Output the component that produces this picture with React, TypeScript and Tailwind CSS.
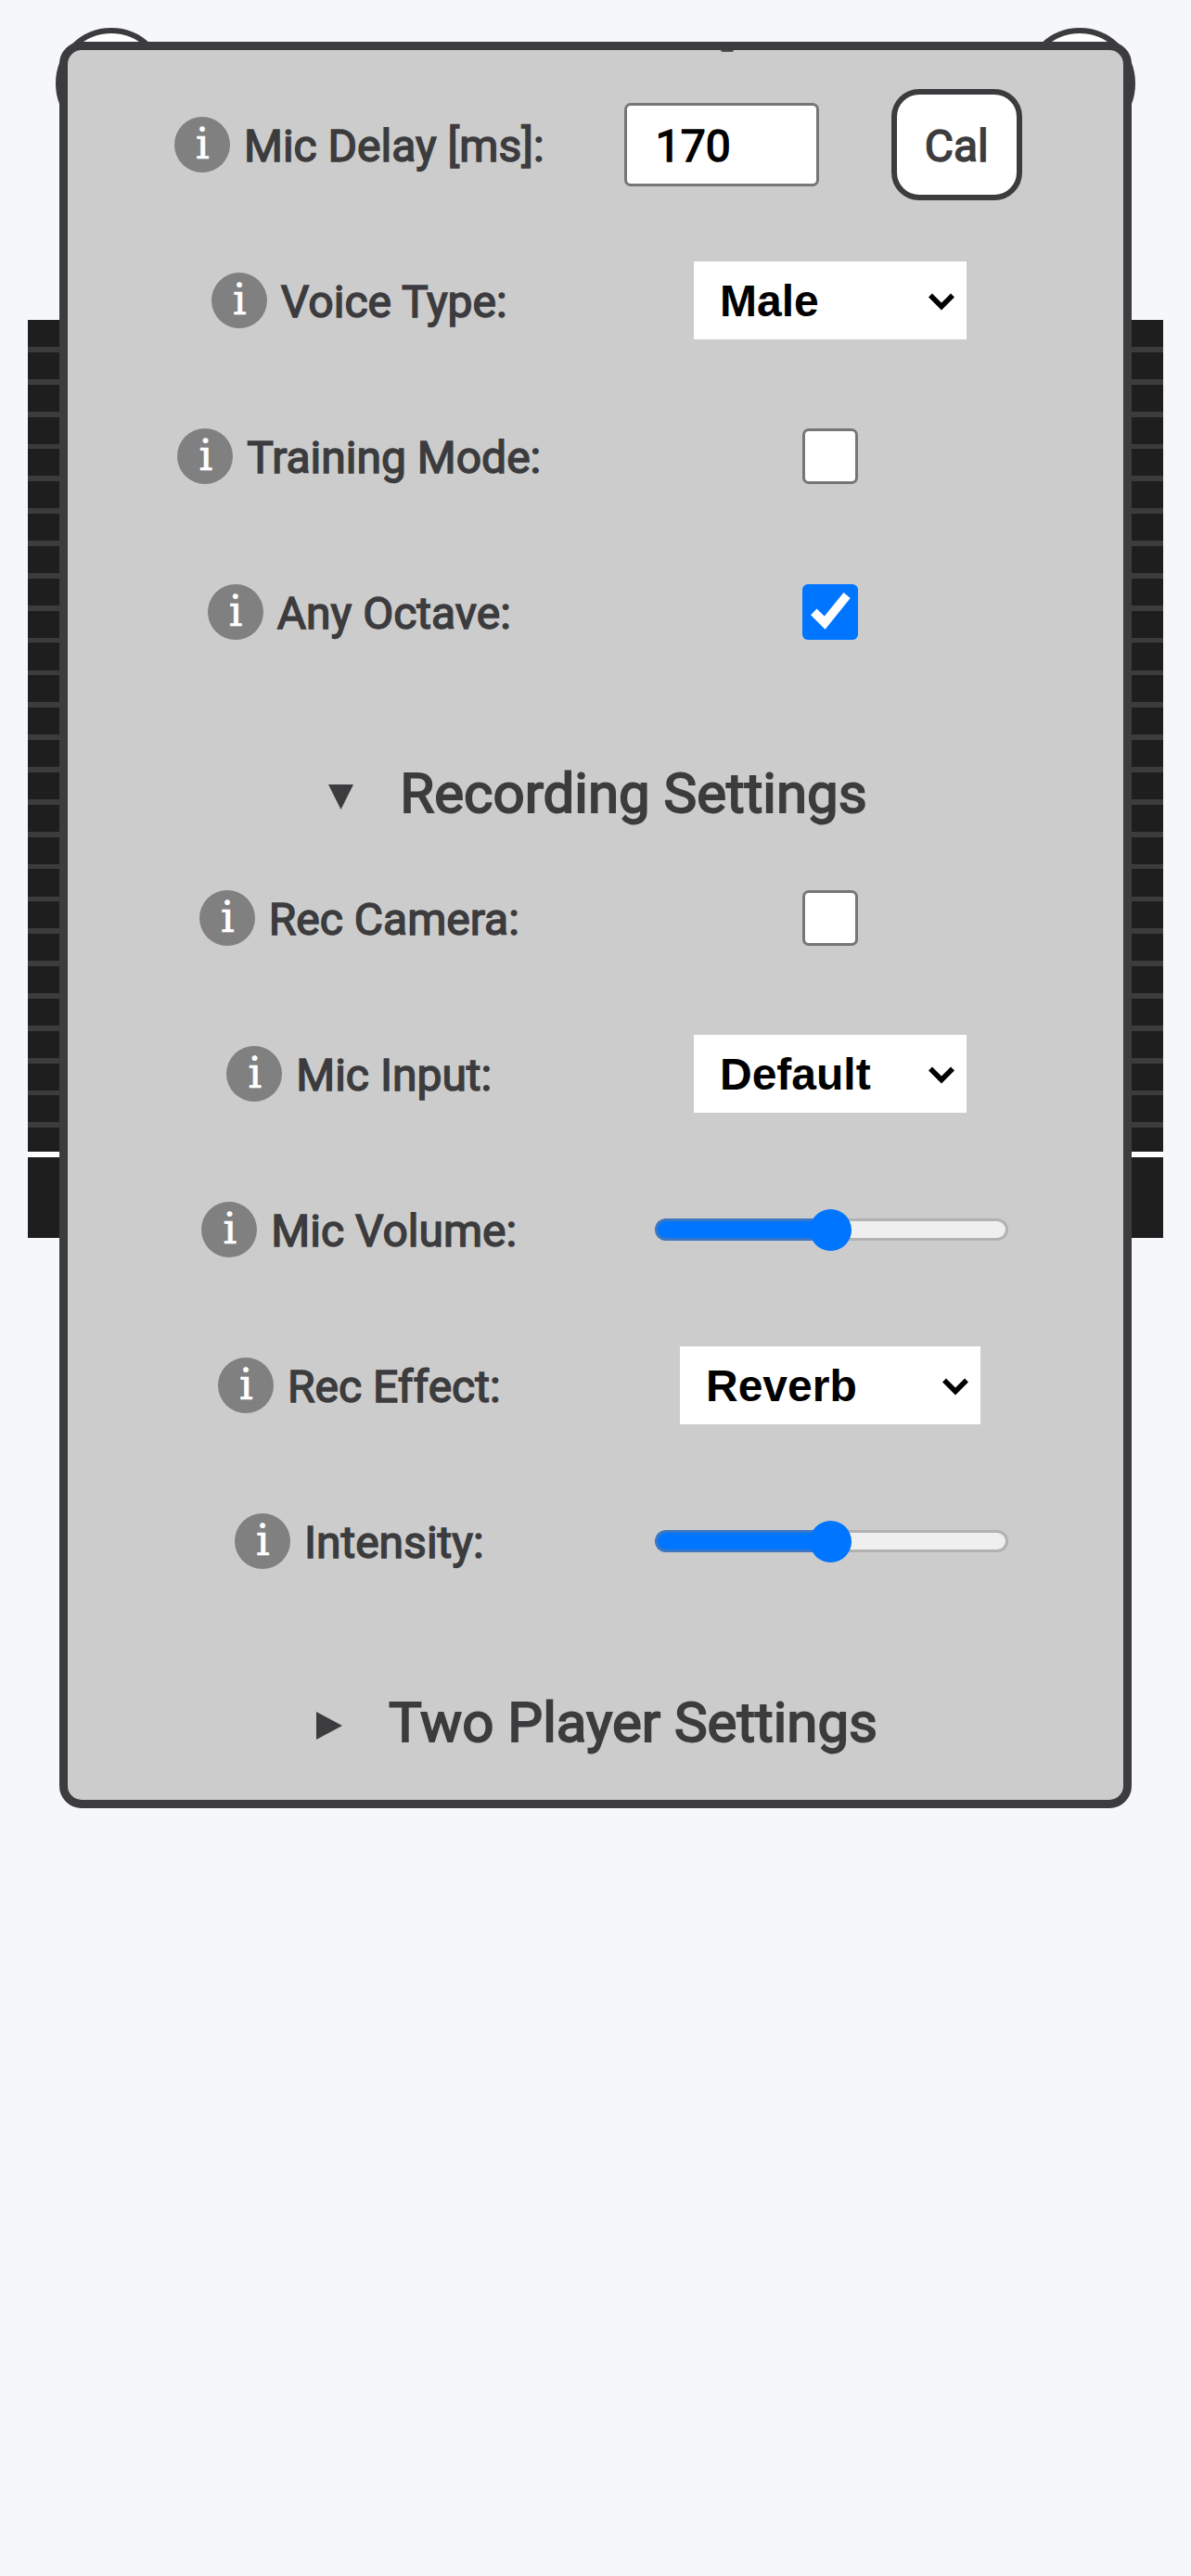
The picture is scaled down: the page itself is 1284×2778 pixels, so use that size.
import type { ReactNode } from "react";

function Info() {
  return (
    <span className="flex h-[60px] w-[60px] shrink-0 justify-center rounded-full bg-[#808080] pl-[1px] font-['DejaVu_Serif','Liberation_Serif',serif] text-[46px] leading-[58px] text-white [-webkit-text-stroke:0.7px_#fff]">
      i
    </span>
  );
}

function Row({ label, children }: { label: string; children: ReactNode }) {
  return (
    <div className="mx-auto grid h-[168px] w-[1015px] grid-cols-2 items-center">
      <div className="flex items-center justify-center gap-[15px] pr-[2px]">
        <Info />
        <span className="pt-[3px] text-[48px] leading-[56px] whitespace-nowrap [-webkit-text-stroke:1.5px_#3c3c3e]">
          {label}
        </span>
      </div>
      <div className="flex items-center justify-center pr-[1.5px]">{children}</div>
    </div>
  );
}

function Select({ value, wide = false }: { value: string; wide?: boolean }) {
  return (
    <button
      className={
        (wide ? "w-[324px]" : "w-[294px]") +
        " flex h-[84px] items-center justify-between bg-white pr-[12px] pl-[28px] pt-[1px] font-['Liberation_Sans',Arial,sans-serif] text-[48px] leading-[55px] font-bold text-black"
      }
    >
      {value}
      <svg className="h-[30px] w-[30px]" viewBox="0 0 30 30" fill="none">
        <path d="M3 8.5 L15 20.5 L27 8.5" stroke="#000" strokeWidth="5.6" />
      </svg>
    </button>
  );
}

function Checkbox({ checked = false }: { checked?: boolean }) {
  return checked ? (
    <span className="h-[60px] w-[60px] rounded-[6px] bg-[#0075ff]">
      <svg className="h-[60px] w-[60px]" viewBox="0 0 60 60">
        <path d="M9 33.3 L15.5 26.5 L23.8 34.4 L44.5 9 L51.7 15 L24.6 48.8 Z" fill="#fff" />
      </svg>
    </span>
  ) : (
    <span className="h-[60px] w-[60px] rounded-[7px] border-[3px] border-[#767676] bg-white" />
  );
}

function Slider() {
  return (
    <div className="relative ml-[3px] flex h-[24px] w-[381px] overflow-visible rounded-full">
      <span className="h-[24px] w-1/2 rounded-l-full border-y-[3px] border-l-[3px] border-[#3b77c2] bg-[#0075ff]" />
      <span className="h-[24px] w-1/2 rounded-r-full border-y-[3px] border-r-[3px] border-[#b2b2b2] bg-[#efefef]" />
      <span className="absolute top-[-10.5px] left-[167px] h-[45px] w-[45px] rounded-full bg-[#0075ff]" />
    </div>
  );
}

function Heading({ open, children }: { open: boolean; children: ReactNode }) {
  return (
    <div className="flex items-center justify-center text-[60px] leading-[70px] whitespace-nowrap [-webkit-text-stroke:1.9px_#3c3c3e]">
      {open ? (
        <svg className="mt-[6px] mr-[50px] ml-[5px] h-[27px] w-[27px]" viewBox="0 0 27 27">
          <path d="M0 0 H27 L13.5 27 Z" fill="#3c3c3e" />
        </svg>
      ) : (
        <svg className="mt-[6px] mr-[50px] ml-[3px] h-[30px] w-[28px]" viewBox="0 0 28 30">
          <path d="M0 0 L28 15 L0 30 Z" fill="#3c3c3e" />
        </svg>
      )}
      {children}
    </div>
  );
}

export default function App() {
  return (
    <div className="relative h-[2778px] w-[1284px] overflow-hidden bg-[#f5f7fb] font-['Roboto',sans-serif] text-[#3c3c3e]">
      <span className="absolute top-[30px] left-[60px] h-[120px] w-[120px] rounded-full border-[6px] border-[#3c3c3e] bg-white" />
      <span className="absolute top-[30px] left-[1104px] h-[120px] w-[120px] rounded-full border-[6px] border-[#3c3c3e] bg-white" />
      <div className="absolute top-[345px] left-[30px] h-[990px] w-[1224px] bg-[#1e1e1e]">
        <div className="h-[897px] bg-[repeating-linear-gradient(to_bottom,#1e1e1e_0px,#1e1e1e_29.1px,#3c3c3c_29.1px,#3c3c3c_34.85px)]" />
        <div className="h-[6px] bg-white" />
      </div>

      <main className="relative mx-auto mt-[45px] h-[1905px] w-[1155.6px] rounded-[24px] border-[9px] border-[#3c3c3e] bg-[#cccccc] pt-[18px]">
        <span className="absolute top-0 left-[703.5px] h-[1.5px] w-[14px] rounded-b-full bg-[#505052]" />
        <Row label="Mic Delay [ms]:">
          <span className="-ml-[15.5px] flex h-[90px] w-[210px] items-center rounded-[7px] border-[3px] border-[#767676] bg-white pt-[3px] pl-[31px] text-[48px] leading-[56px] text-black [-webkit-text-stroke:1.5px_#000]">
            170
          </span>
          <button className="ml-[78px] h-[120px] w-[141px] rounded-[30px] border-[6px] border-[#3c3c3e] bg-white pt-[3px] text-[48px] leading-[56px] [-webkit-text-stroke:1.5px_#3c3c3e]">
            Cal
          </button>
        </Row>
        <Row label="Voice Type:">
          <Select value="Male" />
        </Row>
        <Row label="Training Mode:">
          <Checkbox />
        </Row>
        <Row label="Any Octave:">
          <Checkbox checked />
        </Row>
        <div className="h-[162px] pt-[77px]">
          <Heading open>Recording Settings</Heading>
        </div>
        <Row label="Rec Camera:">
          <Checkbox />
        </Row>
        <Row label="Mic Input:">
          <Select value="Default" />
        </Row>
        <Row label="Mic Volume:">
          <Slider />
        </Row>
        <Row label="Rec Effect:">
          <Select value="Reverb" wide />
        </Row>
        <Row label="Intensity:">
          <Slider />
        </Row>
        <div className="pt-[77px]">
          <Heading open={false}>Two Player Settings</Heading>
        </div>
      </main>
    </div>
  );
}
